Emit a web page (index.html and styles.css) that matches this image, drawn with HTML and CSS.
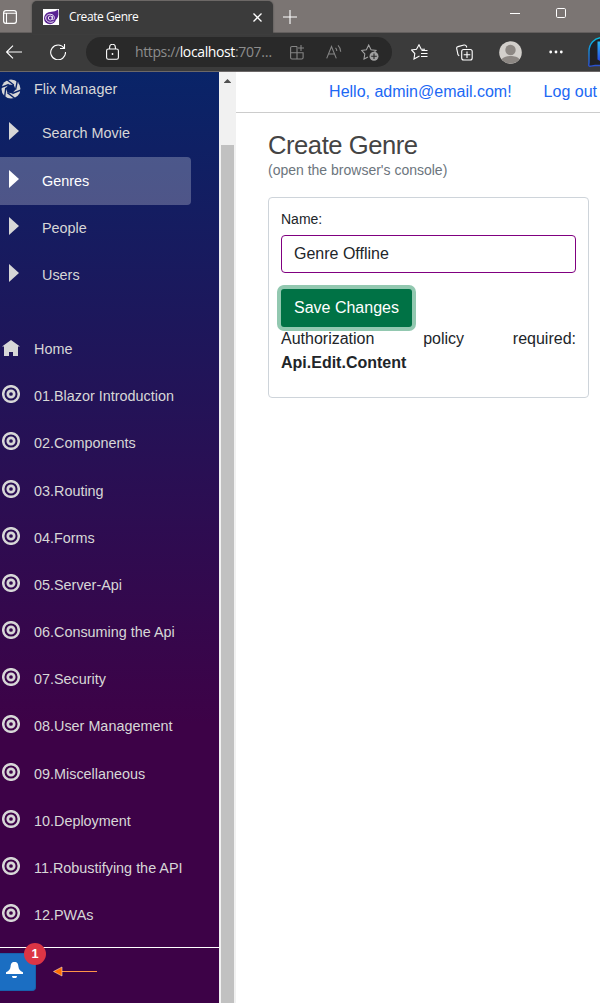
FILE: index.html
```html
<!DOCTYPE html>
<html lang="en">
<head>
<meta charset="utf-8">
<title>Create Genre</title>
<link rel="stylesheet" href="styles.css">
</head>
<body>
<svg class="defs" aria-hidden="true">
  <symbol id="target" viewBox="0 0 18 18"><g fill="none" stroke="currentColor"><circle cx="9" cy="9" r="7.800" stroke-width="2.500"/><circle cx="9" cy="9" r="3.200" stroke-width="2.700"/></g></symbol>
  <symbol id="caret" viewBox="0 0 10 18"><path d="M0 0L10 9L0 18Z" fill="currentColor"/></symbol>
</svg>
<header class="browser">
  <div class="tabs">
    <svg class="workspace" viewBox="0 0 14 14" fill="none" stroke="#fff"><rect x=".6" y=".6" width="12.8" height="12.8" rx="2.3" stroke-width="1.2"/><path d="M1 3.2h12M3.5 3v10" stroke-width="1.1"/></svg>
    <div class="tab">
      <svg class="favicon" viewBox="0 0 16 16"><path fill="#fff" d="M0 0h16v16H0z"/><path fill="#5b2494" d="M3 5C6 2 11 4 15 .6C15.500 4 16 7 13.800 10L11 12L2 10Z"/><circle cx="7" cy="9.200" r="6" fill="#5b2494"/><path fill="none" stroke="#fff" stroke-width=".9" d="M10.500 10.700C9.500 11 9.300 10.300 9.300 9.500V7M9.300 9a2 2 0 1 1-4 0a2 2 0 0 1 4 0M10.500 12.500C7 14.500 2.700 12.500 2.700 9C2.700 5.500 7.600 4.300 10 6.200C11.500 7.400 11.500 9.400 11 10.500"/></svg>
      <span class="tab-title">Create Genre</span>
      <svg class="tab-close" viewBox="0 0 9 9" stroke="#fff" stroke-width="1.3"><path d="M.5.5l8 8M8.5.5l-8 8"/></svg>
    </div>
    <svg class="plus" viewBox="0 0 14 14" stroke="#fff" stroke-width="1.1"><path d="M7 0v14M0 7h14"/></svg>
    <svg class="minimize" viewBox="0 0 10 10" stroke="#fff"><path d="M0 4.5h10"/></svg>
    <svg class="maximize" viewBox="0 0 10 10" fill="none" stroke="#fff"><rect x=".5" y=".5" width="9" height="9" rx="1.2"/></svg>
  </div>
  <div class="toolbar">
    <svg class="back" viewBox="0 0 16 14" fill="none" stroke="#fff" stroke-width="1.1"><path d="M16 7H.8M7 .6L.6 7L7 13.4"/></svg>
    <svg class="reload" viewBox="0 0 16 16" fill="none" stroke="#fff" stroke-width="1.1"><path d="M14.2 4.2A7.4 7.4 0 1 0 15.5 8M14.5 0v4.5H10"/></svg>
    <div class="address">
      <svg class="lock" viewBox="0 0 13 16" fill="none" stroke="#fff" stroke-width="1.1"><rect x=".6" y="5" width="11.8" height="10.2" rx="1.8"/><path d="M3.6 5V3.2a2.9 2.9 0 0 1 5.8 0V5"/><circle cx="6.5" cy="10" r=".9" fill="#fff" stroke="none"/></svg>
      <span class="url">https://<b>localhost</b>:707…</span>
      <svg class="apps" viewBox="0 0 15 15" fill="none" stroke="#858585" stroke-width="1.1"><path d="M7 1.5H2a1.4 1.4 0 0 0-1.400 1.400v9.700A1.400 1.400 0 0 0 2 14h9.700a1.400 1.400 0 0 0 1.400-1.400V7.800H.6M7 1.500V14M11 0v6M8 3h6"/></svg>
      <svg class="read" viewBox="0 0 16 14" fill="none" stroke="#858585" stroke-width="1.100"><path d="M.7 13.400L5.500 1.500l4.800 11.900M2.500 9h6M9.500 2.800c1 .9 1.300 2 1.300 3.200M12 .4c1.900 1.800 2.700 3.600 2.700 6.300"/></svg>
      <svg class="fav-add" viewBox="0 0 18 17" fill="none" stroke="#a0a0a0" stroke-width="1.1"><path d="M7 13l-4 2 .8-5L.6 6.4l4.8-.7L7.700 1 10 5.700l5 .7-1.500 1.500"/><circle cx="13" cy="12.300" r="4.500" fill="#a0a0a0" stroke="none"/><path stroke="#292929" d="M13 9.500v5.600M10.200 12.300h5.600"/></svg>
    </div>
    <svg class="favorites" viewBox="0 0 17 16" fill="none" stroke="#fff" stroke-width="1.100"><path d="M8.500 12L3 15l.8-5.500L.5 6l5-.8L8 .8l2.200 4.400H14M10.500 6.500H16.500M10 9.500h6.500M10 12.500h6.500"/></svg>
    <svg class="collections" viewBox="0 0 17 17" fill="none" stroke="#fff" stroke-width="1.1"><rect x="5.700" y="5.500" width="10.500" height="10.500" rx="2"/><path d="M3.200 11.800L2 10.700.7 4.600c-.2-1 .3-1.800 1.300-2L8 1c1-.2 2 .2 2.400 1.200l.4 1.300M11 7.500v6.600M7.700 10.800h6.600"/></svg>
    <svg class="profile" viewBox="0 0 23 23"><circle cx="11.500" cy="11.500" r="11.300" fill="#d2cfcb"/><circle cx="11.500" cy="9" r="5.200" fill="#8c8783"/><path fill="#8c8783" d="M2.600 18.200C5 13.800 18 13.800 20.400 18.200C16 24 7 24 2.600 18.200Z"/></svg>
    <svg class="more" viewBox="0 0 14 4" fill="#fff"><circle cx="1.700" cy="2" r="1.400"/><circle cx="7" cy="2" r="1.400"/><circle cx="12.300" cy="2" r="1.400"/></svg>
    <svg class="bing" viewBox="0 0 12 32"><defs><linearGradient id="ring" x2="0" y2="1"><stop stop-color="#08bde0"/><stop offset="1" stop-color="#2b50d0"/></linearGradient><linearGradient id="mark" x2="0" y2="1"><stop stop-color="#28b8f0"/><stop offset="1" stop-color="#2848e0"/></linearGradient></defs><path fill="#202124" stroke="url(#ring)" stroke-width="1.400" d="M15 1.500C6 1.500 1 8 1 15.500v10.500c0 2.500-1 4.300.8 4.300C4 30.300 5 29.500 7 29.500h8"/><path fill="url(#mark)" d="M9.500 5.500H12V25l-2.500-1.500Z"/></svg>
  </div>
</header>
<div class="page">
  <aside class="sidebar">
    <nav>
      <a class="row brand"><svg class="aperture" viewBox="0 0 20 20"><circle cx="10" cy="10" r="9.500" fill="currentColor"/><path fill="#0b2367" d="M7.800 5.500L12.800 6L14.600 10.600L11.300 14.500L6.400 13.600L4.800 8.900Z"/><path stroke="#0b2367" stroke-width="1.400" d="M5 0L12.800 6M16.500 1L14.600 10.600M21 10.500L11.300 14.500M14 19.500L6.400 13.600M3.500 19L4.800 8.900M-1 9L7.800 5.500"/></svg>Flix Manager</a>
      <a class="row sub"><svg><use href="#caret"/></svg>Search Movie</a>
      <a class="row sub active"><svg><use href="#caret"/></svg>Genres</a>
      <a class="row sub"><svg><use href="#caret"/></svg>People</a>
      <a class="row sub"><svg><use href="#caret"/></svg>Users</a>
      <a class="row home"><svg viewBox="0 0 18 16"><path fill="currentColor" d="M9 0L18 6.500H16V16H11V12H7v4H2V6.500H0Z"/></svg>Home</a>
      <a class="row"><svg><use href="#target"/></svg>01.Blazor Introduction</a>
      <a class="row"><svg><use href="#target"/></svg>02.Components</a>
      <a class="row"><svg><use href="#target"/></svg>03.Routing</a>
      <a class="row"><svg><use href="#target"/></svg>04.Forms</a>
      <a class="row"><svg><use href="#target"/></svg>05.Server-Api</a>
      <a class="row"><svg><use href="#target"/></svg>06.Consuming the Api</a>
      <a class="row"><svg><use href="#target"/></svg>07.Security</a>
      <a class="row"><svg><use href="#target"/></svg>08.User Management</a>
      <a class="row"><svg><use href="#target"/></svg>09.Miscellaneous</a>
      <a class="row"><svg><use href="#target"/></svg>10.Deployment</a>
      <a class="row"><svg><use href="#target"/></svg>11.Robustifying the API</a>
      <a class="row"><svg><use href="#target"/></svg>12.PWAs</a>
    </nav>
    <div class="notify">
      <div class="bell"><svg viewBox="0 0 17 16" fill="#fff"><path d="M8.500 0C5.500 0 4.800 2 4.600 4.500C4.300 7.500 2.800 9 0 10.300V12h17v-1.700c-2.800-1.300-4.300-2.800-4.600-5.800C12.200 2 11.500 0 8.500 0ZM6 14a2.500 2.300 0 0 0 5 0Z"/></svg><span class="badge">1</span></div>
      <svg class="arrow" viewBox="0 0 45 11"><path stroke="#ff9448" d="M8 5.500h36"/><path fill="#ff6d00" stroke="#ffe0c8" stroke-width=".6" d="M.5 5.500L9 1v9Z"/></svg>
    </div>
  </aside>
  <div class="scrollbar"><svg viewBox="0 0 7 4"><path fill="#505050" d="M3.500 0L7 3.500V4H0v-.5Z"/></svg><div class="thumb"></div></div>
  <main>
    <div class="topbar"><a>Hello, admin@email.com!</a><a>Log out</a></div>
    <section class="content">
      <h1>Create Genre</h1>
      <p class="hint">(open the browser's console)</p>
      <form class="card">
        <label for="name">Name:</label>
        <input id="name" value="Genre Offline">
        <button type="button">Save Changes</button>
        <p class="policy">Authorization policy required: <strong>Api.Edit.Content</strong></p>
      </form>
    </section>
  </main>
</div>
</body>
</html>
```
FILE: styles.css
```css
* { box-sizing: border-box; }
body { margin: 0; width: 600px; height: 1003px; overflow: hidden; font: 16px/24px "Liberation Sans", Arial, sans-serif; color: #212529; background: #fff; }
svg { display: block; flex: none; }
.defs { display: none; }
.browser { height: 72px; background: #3b3b3b; border-bottom: 1px solid #6c6868; font-family: "Open Sans", sans-serif; color: #fff; }
.tabs { display: flex; height: 33px; background: #7b7573; padding-left: 3px; border-bottom: 1px solid #625e5d; }
.workspace { width: 14px; height: 14px; margin-top: 10px; }
.tab { display: flex; align-items: center; width: 241px; height: 33px; margin: 1px 0 0 15px; padding: 0 11px 2px 11px; background: #3b3b3b; border-radius: 5px 5px 0 0; box-shadow: 0 0 2px #444; }
.favicon { width: 16px; height: 16px; }
.tab-title { flex: 1; margin-left: 10px; font-size: 12px; line-height: 16px; letter-spacing: -.42px; }
.tab-close { width: 9px; height: 9px; margin-top: 2px; }
.plus { width: 14px; height: 14px; margin: 10px 0 0 10px; }
.minimize { width: 10px; height: 10px; margin: 9px 0 0 213px; }
.maximize { width: 10px; height: 10px; margin: 8px 0 0 36px; }
.toolbar { display: flex; align-items: center; height: 38px; padding-left: 6px; }
.back { width: 16px; height: 14px; }
.reload { width: 16px; height: 16px; margin-left: 28px; }
.address { display: flex; align-items: center; width: 306px; height: 30px; margin-left: 20px; padding-left: 20px; background: #292929; border-radius: 15px; }
.lock { width: 13px; height: 16px; }
.url { width: 155px; margin-left: 16px; font-size: 14px; line-height: 20px; letter-spacing: -.38px; color: #8d8d8d; white-space: nowrap; }
.url b { font-weight: 400; color: #fff; }
.apps { width: 15px; height: 15px; }
.read { width: 16px; height: 14px; margin-left: 21px; }
.fav-add { width: 18px; height: 17px; margin: 1px 0 0 19px; }
.favorites { width: 17px; height: 16px; margin-left: 19px; }
.collections { width: 17px; height: 17px; margin-left: 28px; }
.profile { width: 23px; height: 23px; margin-left: 26px; }
.more { width: 14px; height: 4px; margin-left: 27px; }
.bing { width: 12px; height: 32px; margin-left: 25px; }
.page { display: flex; height: 931px; }
.sidebar { width: 219px; background: linear-gradient(180deg, #092468 0%, #3d0247 70%); color: #d7d7d7; font-size: 14.4px; }
.row { display: flex; align-items: center; height: 47.2px; padding: 0 0 0 2px; white-space: nowrap; }
.row svg { width: 18px; height: 18px; margin: -4px 14px 0 0; }
.row .aperture { width: 20px; height: 20px; margin: 0 13px 0 -1px; }
.brand { height: 37.5px; padding-bottom: 4px; }
.sub { padding-left: 9px; }
.sub svg { width: 10px; margin-right: 23px; }
.active { width: 191px; height: 48px; background: rgba(255,255,255,.25); border-radius: 0 4px 4px 0; color: #fff; }
.home { margin-top: 26.3px; }
.row.home svg { height: 16px; margin-top: -1px; }
.notify { display: flex; height: 56px; margin-top: 8px; padding-top: 5px; border-top: 1px solid #fff; }
.bell { position: relative; width: 36px; height: 38px; padding: 8px 0 0 6px; background: #1b6ec2; border: 1px solid #1861ac; border-left: 0; border-radius: 0 4px 4px 0; }
.bell svg { width: 17px; height: 16px; }
.badge { position: absolute; left: 24px; top: -11px; width: 22px; height: 22px; border-radius: 11px; background: #dc3545; color: #fff; text-align: center; font-size: 12.8px; font-weight: 700; line-height: 22px; }
.arrow { width: 45px; height: 11px; margin: 13px 0 0 17px; }
.scrollbar { width: 17px; padding: 7px 2px 0; background: #f1f1f1; }
.scrollbar svg { width: 7px; height: 4px; margin: 0 auto; }
.thumb { height: 858px; margin-top: 62px; background: #c1c1c1; }
main { width: 364px; }
.topbar { display: flex; justify-content: flex-end; height: 41px; padding: 8px 3px 0 0; gap: 32px; border-bottom: 1px solid #ccc; color: #2068f4; }
.content { padding: 17px 11px 0 32px; }
h1 { margin: 0; font-size: 25.6px; line-height: 31px; font-weight: 400; letter-spacing: -.46px; color: #444; }
.hint { margin: -1px 0 16px; font-size: 14px; line-height: 21px; color: #6c757d; }
.card { display: block; height: 201px; padding: 11px 12px 0; border: 1px solid #ced4da; border-radius: 4px; }
label { display: block; font-size: 14px; line-height: 21px; margin-bottom: 5px; }
input { display: block; width: 295px; height: 38px; padding: 6px 12px; border: 1px solid #800080; border-radius: 4px; font: inherit; color: inherit; }
button { display: block; height: 38px; margin-top: 16px; padding: 0 13px; border: 0; border-radius: 3px; background: #007245; box-shadow: 0 0 0 4px #92c8b0; color: #fff; font: inherit; }
.policy { margin: 0; text-align: justify; }
```
